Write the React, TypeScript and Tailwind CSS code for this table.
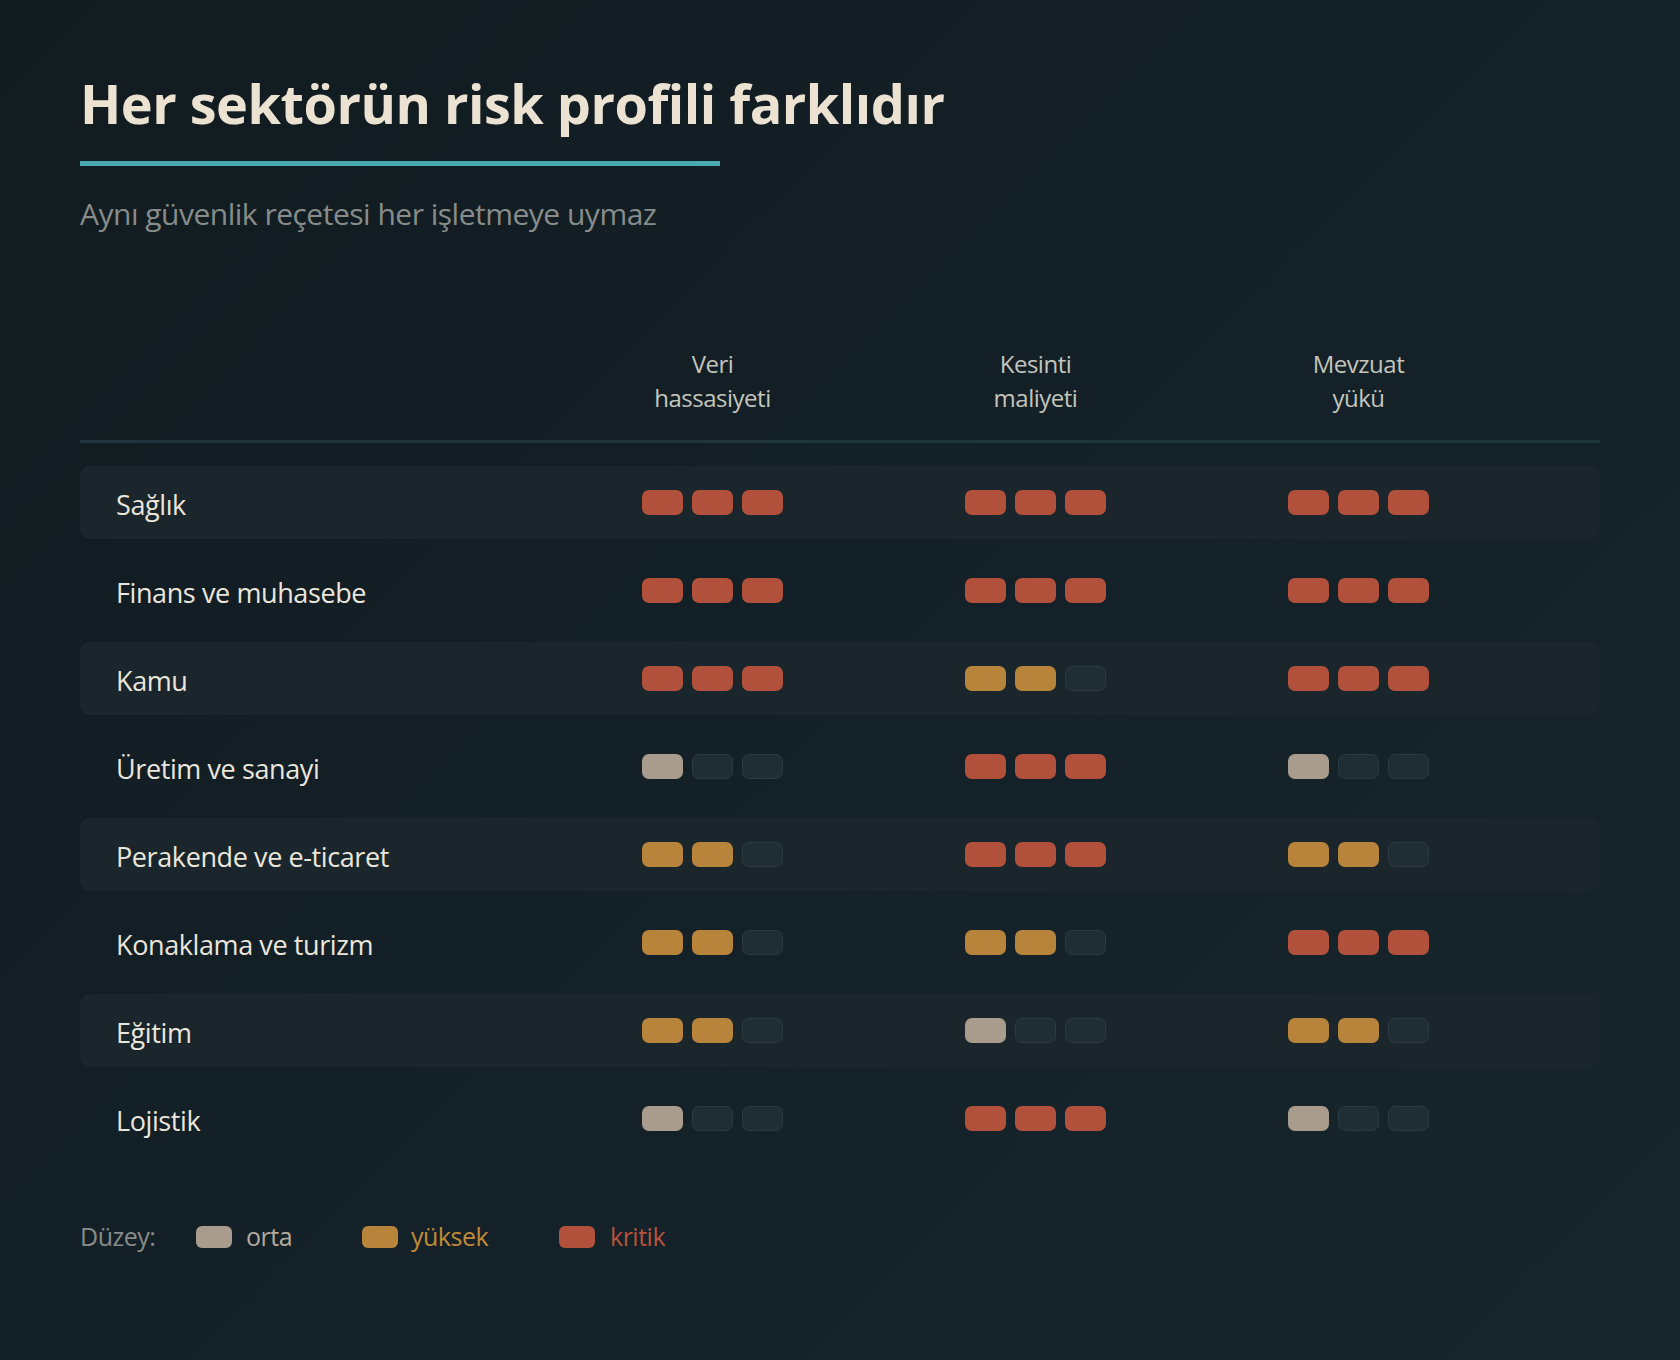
const columns = [
  ["Veri", "hassasiyeti"],
  ["Kesinti", "maliyeti"],
  ["Mevzuat", "yükü"],
];

// 0 = boş, 1 = orta, 2 = yüksek, 3 = kritik
const sectors: { name: string; levels: number[] }[] = [
  { name: "Sağlık", levels: [3, 3, 3] },
  { name: "Finans ve muhasebe", levels: [3, 3, 3] },
  { name: "Kamu", levels: [3, 2, 3] },
  { name: "Üretim ve sanayi", levels: [1, 3, 1] },
  { name: "Perakende ve e-ticaret", levels: [2, 3, 2] },
  { name: "Konaklama ve turizm", levels: [2, 2, 3] },
  { name: "Eğitim", levels: [2, 1, 2] },
  { name: "Lojistik", levels: [1, 3, 1] },
];

const fill: Record<number, string> = {
  1: "bg-[#a99c8c]",
  2: "bg-[#b8843b]",
  3: "bg-[#b1503b]",
};

function Meter({ level }: { level: number }) {
  return (
    <div className="flex items-center justify-center gap-[9px]">
      {[1, 2, 3].map((i) => (
        <div
          key={i}
          className={
            i <= level
              ? `h-[25px] w-[41px] rounded-[7px] ${fill[level]}`
              : "h-[25px] w-[41px] rounded-[7px] bg-[#1f2e34] border border-[#2a3a40]"
          }
        />
      ))}
    </div>
  );
}

export default function App() {
  return (
    <div
      className="min-h-[1360px] w-full bg-[linear-gradient(135deg,#111b20_0%,#142128_55%,#17262c_100%)] text-[#e8e2d6]"
      style={{ fontFamily: '"Open Sans", "Noto Sans", sans-serif' }}
    >
      <div className="px-20 pt-[67px]">
        <h1 className="text-[54px] font-bold leading-[72px] tracking-[-0.5px] text-[#ece2d2]">
          Her sektörün risk profili farklıdır
        </h1>
        <div className="mt-[22px] h-[5px] w-[640px] bg-[#4aaab2]" />
        <p className="mt-[30px] text-[30px] leading-[36px] tracking-[-0.5px] text-[#878c8a]">
          Aynı güvenlik reçetesi her işletmeye uymaz
        </p>

        <div className="mt-[115px] w-[1520px]">
          <div className="grid grid-cols-[471px_323px_323px_323px] border-b-[3px] border-[#1d363c] pb-[25px]">
            <div />
            {columns.map(([a, b]) => (
              <div key={a} className="text-center text-[24px] leading-[34px] tracking-[-0.5px] text-[#c3c5bd]">
                <div>{a}</div>
                <div>{b}</div>
              </div>
            ))}
          </div>

          <div className="mt-[23px] flex flex-col gap-[15px]">
            {sectors.map((s, idx) => (
              <div
                key={s.name}
                className={`grid h-[73px] grid-cols-[471px_323px_323px_323px] items-center rounded-[10px] ${
                  idx % 2 === 0 ? "bg-[#1a262b]" : ""
                }`}
              >
                <div className="pl-[36px] pt-[6px] text-[27px] tracking-[-0.4px] text-[#ebe6dc]">{s.name}</div>
                {s.levels.map((l, i) => (
                  <Meter key={i} level={l} />
                ))}
              </div>
            ))}
          </div>

          <div className="mt-[63px] flex items-center text-[25px] tracking-[-0.5px]">
            <span className="w-[116px] text-[#878c89]">Düzey:</span>
            <span className="h-[22px] w-[36px] rounded-[6px] bg-[#a99c8c]" />
            <span className="ml-[14px] w-[116px] text-[#b3ab9e]">orta</span>
            <span className="h-[22px] w-[36px] rounded-[6px] bg-[#b8843b]" />
            <span className="ml-[13px] w-[148px] text-[#c08a37]">yüksek</span>
            <span className="h-[22px] w-[36px] rounded-[6px] bg-[#b1503b]" />
            <span className="ml-[15px] text-[#b8533c]">kritik</span>
          </div>
        </div>
      </div>
    </div>
  );
}
